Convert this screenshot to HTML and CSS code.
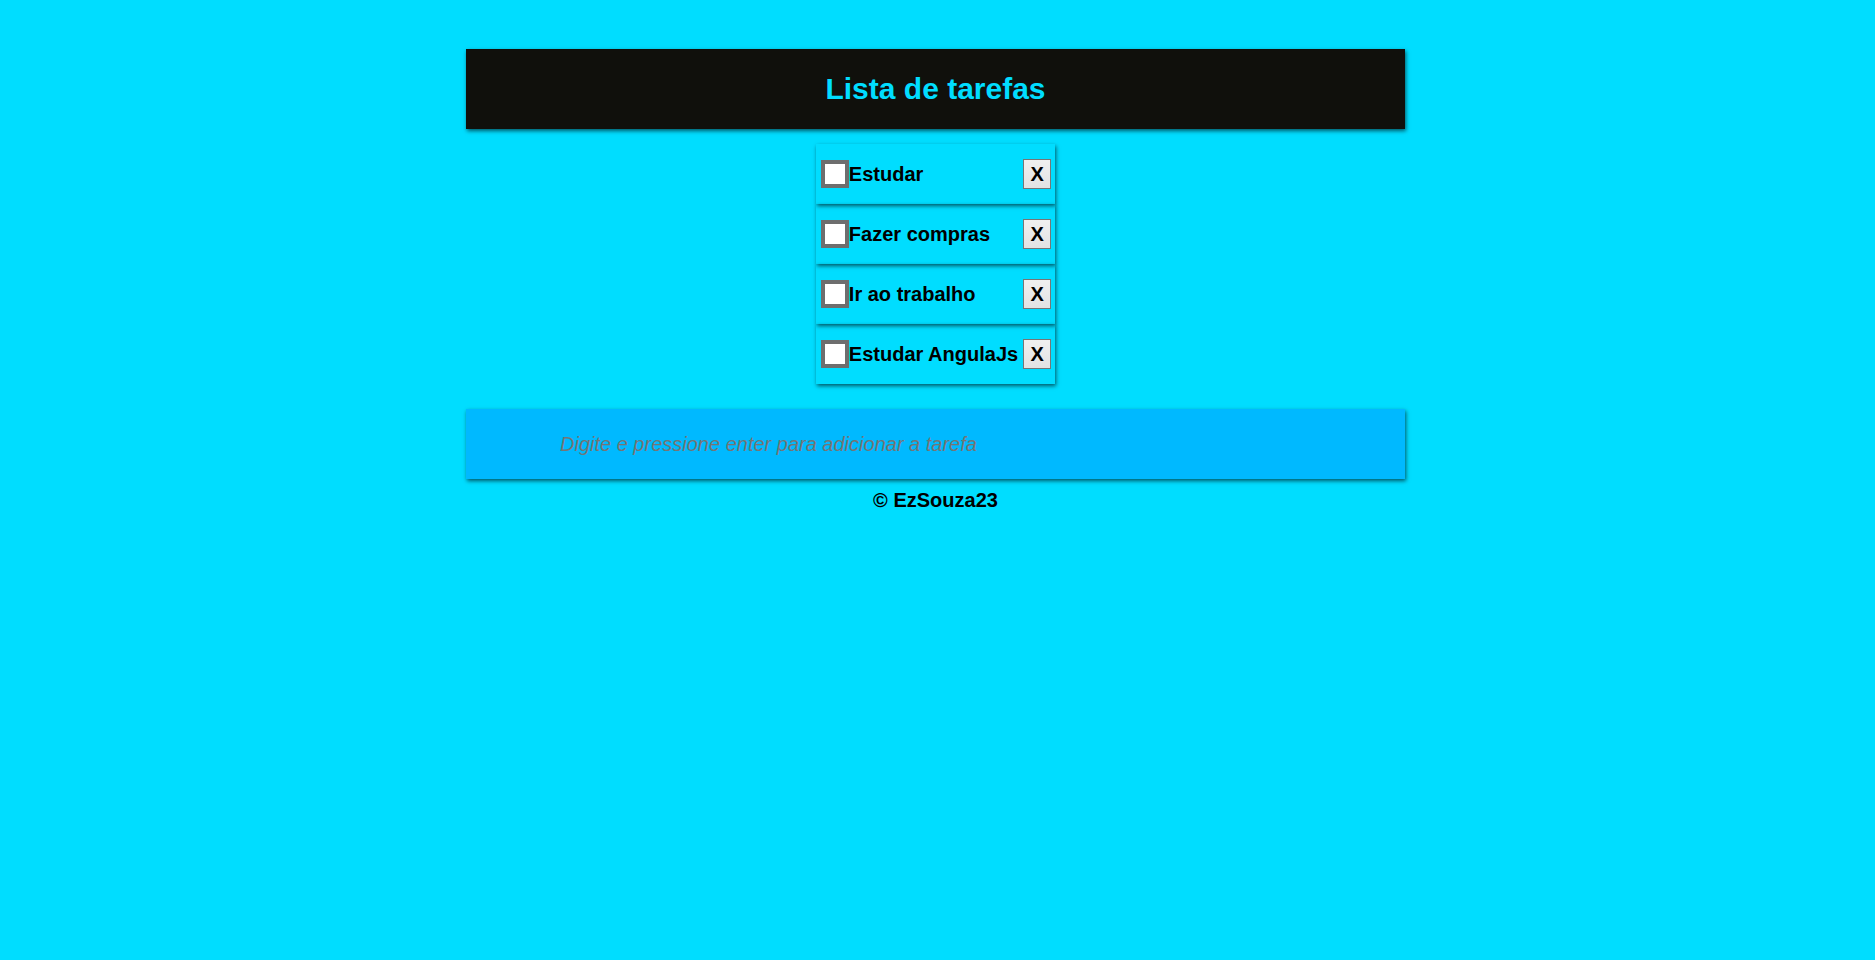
FILE: index.html
```html
<!DOCTYPE html>
<html lang="pt-BR">
<head>
<meta charset="utf-8">
<title>Lista de tarefas</title>
<link rel="stylesheet" href="styles.css">
</head>
<body>
<div class="page">
  <header class="header">
    <h1 class="title">Lista de tarefas</h1>
  </header>
  <ul class="todo-list">
    <li class="todo-item">
      <label class="todo-label"><input class="todo-check" type="checkbox"><span class="todo-text">Estudar</span></label>
      <button class="todo-remove" type="button">X</button>
    </li>
    <li class="todo-item">
      <label class="todo-label"><input class="todo-check" type="checkbox"><span class="todo-text">Fazer compras</span></label>
      <button class="todo-remove" type="button">X</button>
    </li>
    <li class="todo-item">
      <label class="todo-label"><input class="todo-check" type="checkbox"><span class="todo-text">Ir ao trabalho</span></label>
      <button class="todo-remove" type="button">X</button>
    </li>
    <li class="todo-item">
      <label class="todo-label"><input class="todo-check" type="checkbox"><span class="todo-text">Estudar AngulaJs</span></label>
      <button class="todo-remove" type="button">X</button>
    </li>
  </ul>
  <div class="new-todo-wrap">
    <input class="new-todo" type="text" placeholder="Digite e pressione enter para adicionar a tarefa" autofocus>
  </div>
  <footer class="footer">© EzSouza23</footer>
</div>
</body>
</html>
```

FILE: styles.css
```css
html, body {
  margin: 0;
  padding: 0;
  background: #00ddff;
  font-family: "Liberation Sans", Arial, sans-serif;
}

.page {
  display: flex;
  flex-direction: column;
  align-items: center;
  padding: 49px 4px 0 0;
}

.header {
  width: 939px;
  height: 80px;
  background: #10100c;
  box-shadow: 1px 2px 4px rgba(0, 0, 0, 0.6);
  display: flex;
  align-items: center;
  justify-content: center;
}

.title {
  margin: 0;
  font-size: 30px;
  font-weight: bold;
  color: #00ddff;
  line-height: 34px;
}

.todo-list {
  list-style: none;
  margin: 15px 0 0 0;
  padding: 0;
  display: flex;
  flex-direction: column;
}

.todo-item {
  height: 60px;
  box-sizing: border-box;
  padding: 0 4px 0 5px;
  display: flex;
  align-items: center;
  justify-content: space-between;
  box-shadow: 1px 2px 4px rgba(0, 0, 0, 0.6);
}

.todo-label {
  display: flex;
  align-items: center;
  margin-right: 5px;
}

.todo-check {
  appearance: none;
  -webkit-appearance: none;
  margin: 0;
  width: 28px;
  height: 28px;
  box-sizing: border-box;
  border: 4px solid #6e6e6e;
  background: #ffffff;
}

.todo-text {
  font-size: 20px;
  font-weight: bold;
  color: #000;
  line-height: 23px;
}

.todo-remove {
  width: 28px;
  height: 30px;
  box-sizing: border-box;
  padding: 0;
  border: 1px solid #767676;
  background: linear-gradient(#f0f0f0, #e3e3e3);
  font-family: "Liberation Sans", Arial, sans-serif;
  font-size: 20px;
  font-weight: bold;
  color: #000;
  line-height: 26px;
}

.new-todo-wrap {
  margin-top: 25px;
  width: 939px;
  box-shadow: 1px 2px 4px rgba(0, 0, 0, 0.6);
}

.new-todo {
  display: block;
  width: 100%;
  height: 70px;
  box-sizing: border-box;
  border: none;
  outline: none;
  background: #00b9ff;
  padding: 0 0 0 94px;
  font-family: "Liberation Sans", Arial, sans-serif;
  font-size: 20px;
  font-style: italic;
  color: #000;
}

.new-todo::placeholder {
  color: #757575;
  font-style: italic;
}

.footer {
  margin-top: 10px;
  font-size: 20px;
  font-weight: bold;
  line-height: 23px;
  color: #000;
}
```
